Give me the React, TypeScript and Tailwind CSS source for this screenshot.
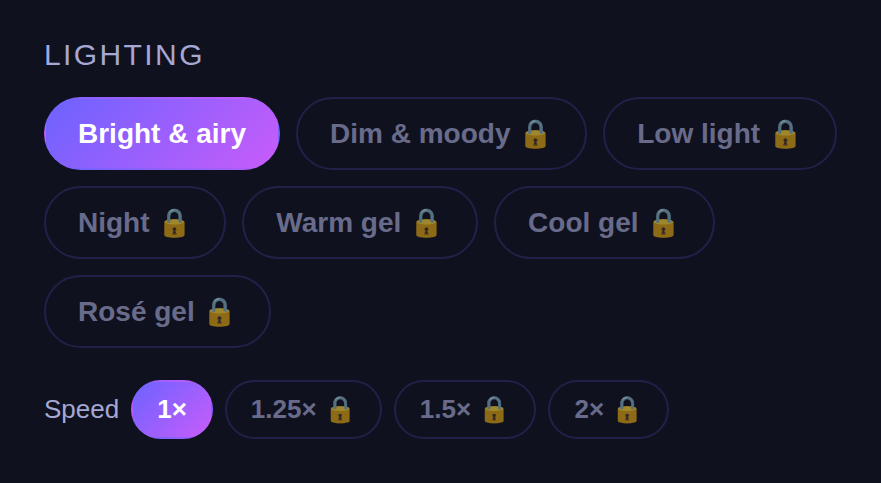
const lights = ["Bright & airy", "Dim & moody", "Low light", "Night", "Warm gel", "Cool gel", "Rosé gel"];
const speeds = ["1×", "1.25×", "1.5×", "2×"];

type PillProps = { label: string; active: boolean; small?: boolean };

function Pill({ label, active, small }: PillProps) {
  const size = small ? "h-[59px] px-6 text-[26px]" : "h-[73px] px-8 text-[28px]";
  const look = active
    ? "border-transparent bg-[linear-gradient(135deg,#6c63ff,#c85cfa)] text-white"
    : "border-[#2e2b66] bg-transparent text-[#a5a8d4] opacity-60";
  return (
    <button type="button" disabled={!active} aria-pressed={active} className={`rounded-full border-2 font-bold whitespace-nowrap ${size} ${look}`}>
      {active ? label : `${label} 🔒`}
    </button>
  );
}

export default function App() {
  return (
    <main className="min-h-screen bg-[#0f111e] px-11 py-[37px] font-['Liberation_Sans',sans-serif]">
      <h2 className="mb-6 text-[30px] leading-9 tracking-[0.08em] text-[#a5a8d4]">LIGHTING</h2>
      <div className="flex flex-wrap gap-4">
        {lights.map((label, i) => <Pill key={label} label={label} active={i === 0} />)}
      </div>
      <div className="mt-8 flex flex-wrap items-center gap-3">
        <span className="text-[26px] text-[#a5a8d4]">Speed</span>
        {speeds.map((label, i) => <Pill key={label} label={label} active={i === 0} small />)}
      </div>
    </main>
  );
}
